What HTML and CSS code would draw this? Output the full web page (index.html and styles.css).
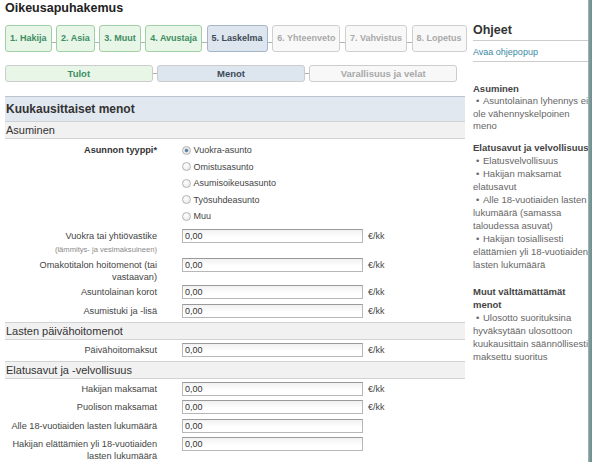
FILE: index.html
```html
<!DOCTYPE html>
<html lang="fi">
<head>
<meta charset="utf-8">
<title>Oikeusapuhakemus</title>
<link rel="stylesheet" href="styles.css">
</head>
<body>
<div class="page">
  <main class="main">
    <h1 class="app-title">Oikeusapuhakemus</h1>

    <nav class="steps">
      <span class="step done">1. Hakija</span><span class="link"></span>
      <span class="step done">2. Asia</span><span class="link"></span>
      <span class="step done">3. Muut</span><span class="link"></span>
      <span class="step done">4. Avustaja</span><span class="link"></span>
      <span class="step current">5. Laskelma</span><span class="link"></span>
      <span class="step todo">6. Yhteenveto</span><span class="link"></span>
      <span class="step todo">7. Vahvistus</span><span class="link"></span>
      <span class="step todo">8. Lopetus</span>
    </nav>

    <div class="subtabs">
      <span class="subtab done">Tulot</span><span class="link"></span>
      <span class="subtab current">Menot</span><span class="link"></span>
      <span class="subtab todo">Varallisuus ja velat</span>
    </div>

    <section class="panel">
      <h2 class="panel-title">Kuukausittaiset menot</h2>

      <h3 class="group-title">Asuminen</h3>
      <div class="group">
        <div class="row">
          <div class="label strong radio-label">Asunnon tyyppi*</div>
          <div class="radios">
            <label class="radio"><span class="dot checked"></span>Vuokra-asunto</label>
            <label class="radio"><span class="dot"></span>Omistusasunto</label>
            <label class="radio"><span class="dot"></span>Asumisoikeusasunto</label>
            <label class="radio"><span class="dot"></span>Työsuhdeasunto</label>
            <label class="radio"><span class="dot"></span>Muu</label>
          </div>
        </div>
        <div class="row tall">
          <div class="label">Vuokra tai yhtiövastike<span class="hint">(lämmitys- ja vesimaksuineen)</span></div>
          <div class="field">0,00</div><span class="unit">€/kk</span>
        </div>
        <div class="row tall">
          <div class="label">Omakotitalon hoitomenot (tai<br>vastaavan)</div>
          <div class="field">0,00</div><span class="unit">€/kk</span>
        </div>
        <div class="row">
          <div class="label">Asuntolainan korot</div>
          <div class="field">0,00</div><span class="unit">€/kk</span>
        </div>
        <div class="row">
          <div class="label">Asumistuki ja -lisä</div>
          <div class="field">0,00</div><span class="unit">€/kk</span>
        </div>
      </div>

      <h3 class="group-title">Lasten päivähoitomenot</h3>
      <div class="group">
        <div class="row">
          <div class="label">Päivähoitomaksut</div>
          <div class="field">0,00</div><span class="unit">€/kk</span>
        </div>
      </div>

      <h3 class="group-title">Elatusavut ja -velvollisuus</h3>
      <div class="group">
        <div class="row">
          <div class="label">Hakijan maksamat</div>
          <div class="field">0,00</div><span class="unit">€/kk</span>
        </div>
        <div class="row">
          <div class="label">Puolison maksamat</div>
          <div class="field">0,00</div><span class="unit">€/kk</span>
        </div>
        <div class="row">
          <div class="label">Alle 18-vuotiaiden lasten lukumäärä</div>
          <div class="field">0,00</div>
        </div>
        <div class="row">
          <div class="label">Hakijan elättämien yli 18-vuotiaiden<br>lasten lukumäärä</div>
          <div class="field">0,00</div>
        </div>
      </div>
    </section>
  </main>

  <aside class="sidebar">
    <h2 class="side-title">Ohjeet</h2>
    <div class="side-link"><a href="#">Avaa ohjepopup</a></div>
    <div class="help">
      <p class="help-head first">Asuminen</p>
      <p class="help-text tight"><span class="b">•</span>Asuntolainan lyhennys ei<br>ole vähennyskelpoinen<br>meno</p>
      <p class="help-head second">Elatusavut ja velvollisuus</p>
      <p class="help-text"><span class="b">•</span>Elatusvelvollisuus<br><span class="b">•</span>Hakijan maksamat<br>elatusavut<br><span class="b">•</span>Alle 18-vuotiaiden lasten<br>lukumäärä (samassa<br>taloudessa asuvat)<br><span class="b">•</span>Hakijan tosiallisesti<br>elättämien yli 18-vuotiaiden<br>lasten lukumäärä</p>
      <p class="help-head third">Muut välttämättämät<br>menot</p>
      <p class="help-text"><span class="b">•</span>Ulosotto suorituksina<br>hyväksytään ulosottoon<br>kuukausittain säännöllisesti<br>maksettu suoritus</p>
    </div>
  </aside>

  <div class="edge"></div>
</div>
</body>
</html>
```

FILE: styles.css
```css
* { box-sizing: border-box; }

body {
  margin: 0;
  font-family: "Liberation Sans", Arial, sans-serif;
  color: #444;
  background: #fff;
}

.page {
  display: flex;
  height: 462px;
  overflow: hidden;
}

.main {
  flex: none;
  width: 465px;
  padding-left: 5px;
}

/* title */
.app-title {
  margin: 0;
  padding-top: 1px;
  font-size: 12.5px;
  line-height: 15px;
  font-weight: bold;
  color: #222;
}

/* step tabs */
.steps {
  display: flex;
  align-items: center;
  margin-top: 9px;
  height: 27px;
}

.step {
  flex: none;
  height: 27px;
  padding: 0 4px;
  border: 1px solid #ccc;
  border-radius: 3px;
  font-size: 9px;
  font-weight: bold;
  line-height: 25px;
  white-space: nowrap;
}

.link {
  flex: none;
  width: 4.5px;
  height: 1px;
  margin-top: 7px;
  background: #a9b8a9;
}

.done {
  background: #e7f6e7;
  border-color: #a3cfa6;
  color: #3f8d62;
}

.current {
  background: #dde5ee;
  border-color: #a7b6c6;
  color: #3d4a58;
}

.todo {
  background: #f8f8f8;
  border-color: #cfcfcf;
  color: #a9a9a9;
}

/* sub tabs */
.subtabs {
  display: flex;
  align-items: center;
  width: 452px;
  height: 17px;
  margin-top: 13px;
}

.subtab {
  flex: 1;
  height: 17px;
  border: 1px solid #ccc;
  border-radius: 3px;
  text-align: center;
  font-size: 9.5px;
  font-weight: bold;
  line-height: 15px;
  white-space: nowrap;
}

.subtabs .link {
  margin-top: 0;
}

/* panel */
.panel {
  margin-top: 14px;
  width: 460px;
}

.panel-title {
  margin: 0;
  height: 25px;
  padding-left: 1px;
  border-top: 1px solid #b9c4d0;
  background: #e2e8ef;
  font-size: 12px;
  font-weight: bold;
  line-height: 24px;
  color: #333;
}

.group-title {
  margin: 0;
  height: 18px;
  padding-left: 1px;
  border-top: 1px solid #cfd3d6;
  border-bottom: 1px solid #d2d2d2;
  background: #f1f1f1;
  font-size: 11px;
  font-weight: normal;
  line-height: 17px;
  color: #333;
}

.group {
  display: flex;
  flex-direction: column;
  gap: 4.5px;
  padding: 3px 0 4px;
}

.row {
  display: flex;
  align-items: flex-start;
}

.row.tall {
  margin-bottom: -2px;
}

.label {
  flex: none;
  width: 152px;
  padding-top: 1px;
  text-align: right;
  font-size: 9.2px;
  line-height: 12px;
  color: #444;
  white-space: nowrap;
}

.label.strong {
  font-weight: bold;
  color: #333;
}

.label.radio-label {
  padding-top: 0;
  line-height: 16.5px;
}

.hint {
  display: block;
  margin-top: 3px;
  font-size: 7.6px;
  line-height: 10px;
  color: #8a8a8a;
}

.field {
  flex: none;
  width: 181px;
  height: 14px;
  margin-left: 25px;
  padding-left: 2px;
  border: 1px solid #b7b7b7;
  border-top-color: #9a9a9a;
  background: linear-gradient(#f1f1f1, #fff 60%);
  font-size: 9px;
  line-height: 12px;
  color: #333;
}

.unit {
  margin-left: 5px;
  font-size: 9px;
  line-height: 14px;
  color: #444;
}

.radios {
  display: flex;
  flex-direction: column;
  margin-left: 25px;
}

.radio {
  display: flex;
  align-items: center;
  height: 16.5px;
  font-size: 9px;
  color: #444;
}

.dot {
  flex: none;
  width: 9px;
  height: 9px;
  margin-right: 2.5px;
  border: 1px solid #b3b3b3;
  border-radius: 50%;
  background: radial-gradient(circle at 40% 35%, #fff 0, #ececec 70%);
}

.dot.checked {
  background: radial-gradient(circle, #4f7698 0, #6f93b0 28%, #e6e6e6 45%, #f6f6f6 100%);
}

/* sidebar */
.sidebar {
  flex: none;
  width: 115px;
  margin-left: 8px;
  overflow: hidden;
}

.side-title {
  margin: 22px 0 0;
  padding-bottom: 2px;
  border-bottom: 1px solid #ccc;
  font-size: 12.5px;
  font-weight: bold;
  line-height: 16px;
  color: #333;
}

.side-link {
  padding: 5px 0 3px;
  border-bottom: 1px solid #ccc;
  font-size: 9px;
  line-height: 12px;
}

.side-link a {
  color: #3a8aa6;
  text-decoration: none;
}

.help p {
  margin: 0;
  font-size: 9.5px;
  line-height: 13px;
  white-space: nowrap;
}

.help-head {
  font-weight: bold;
  color: #444;
}

.help-head.first {
  margin-top: 20.5px;
  line-height: 12.5px;
}

.help-head.second {
  margin-top: 8px;
}

.help-head.third {
  margin-top: 14px;
}

.help-text {
  color: #666;
}

.help-text.tight {
  line-height: 12.5px;
}

.b {
  display: inline-block;
  width: 10px;
  padding-left: 3px;
}

.edge {
  flex: none;
  width: 4px;
  background: linear-gradient(90deg, #a9bcbc 0, #7c9a9a 40%, #6f8e8f 100%);
}
```
